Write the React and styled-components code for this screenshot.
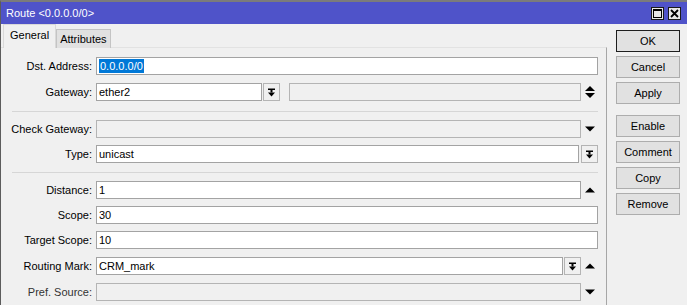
import React from 'react';
import styled, { createGlobalStyle } from 'styled-components';

const GlobalStyle = createGlobalStyle`
  html, body {
    margin: 0;
    padding: 0;
    background: #f0f0f0;
    font-family: 'Liberation Sans', Arial, sans-serif;
    font-size: 11px;
    color: #000;
  }
`;

const Window = styled.div`
  width: 687px;
  height: 305px;
  box-sizing: border-box;
  overflow: hidden;
  display: flex;
  flex-direction: column;
  border-top: 2px solid #7b7b7b;
  border-left: 1px solid #5c5c5c;
  background: #f0f0f0;
`;

const TitleBar = styled.div`
  height: 22px;
  flex: none;
  display: flex;
  align-items: center;
  justify-content: space-between;
  padding: 0 6px 0 5px;
  background: #4f53c9;
  color: #fff;
`;

const TitleButtons = styled.div`
  display: flex;
  gap: 4px;
`;

const TitleButton = styled.div`
  width: 11px;
  height: 11px;
  border: 1px solid #1a1a1a;
  background: #e8e8e8;
  display: flex;
  align-items: center;
  justify-content: center;
`;

const Body = styled.div`
  flex: 1;
  display: flex;
  min-height: 0;
`;

const Main = styled.div`
  width: 606px;
  flex: none;
  display: flex;
  flex-direction: column;
`;

const Tabs = styled.div`
  height: 24px;
  flex: none;
  display: flex;
  align-items: flex-end;
  padding-left: 2px;
`;

const Tab = styled.div`
  box-sizing: border-box;
  height: ${({ active }) => (active ? 24 : 19)}px;
  padding: 0 ${({ active }) => (active ? 6 : 3)}px;
  display: flex;
  align-items: center;
  padding-bottom: ${({ active }) => (active ? 4 : 0)}px;
  background: ${({ active }) => (active ? '#f0f0f0' : '#e1e1e1')};
  border: 1px solid ${({ active }) => (active ? '#d9d9d9' : '#c4c4c4')};
  border-bottom: none;
  position: relative;
  z-index: ${({ active }) => (active ? 1 : 0)};
`;

const Panel = styled.div`
  flex: 1;
  border-right: 1px solid #a6a6a6;
  border-top: 1px solid #e2e2e2;
  margin-top: -1px;
  padding: 9px 8px 0 0;
`;

const Group = styled.div`
  display: flex;
  flex-direction: column;
  gap: ${({ gap }) => gap}px;
`;

const Separator = styled.div`
  height: 1px;
  background: #d6d6d6;
  margin: ${({ top }) => top}px 0 8px 11px;
`;

const Row = styled.div`
  display: flex;
  align-items: center;
  height: 18px;
  margin-top: ${({ extra = 0 }) => extra}px;
`;

const Label = styled.div`
  width: 91px;
  flex: none;
  text-align: right;
  margin-right: 4px;
  white-space: nowrap;
  color: ${({ dim }) => (dim ? '#333' : '#000')};
`;

const Input = styled.div`
  box-sizing: border-box;
  height: 18px;
  ${({ width }) => (width ? `width: ${width}px; flex: none;` : 'flex: 1;')}
  border: 1px solid ${({ disabled }) => (disabled ? '#b4b4b4' : '#a3a3a3')};
  background: ${({ disabled }) => (disabled ? '#f0f0f0' : '#fff')};
  display: flex;
  align-items: center;
  padding-left: 2px;
  white-space: nowrap;
  overflow: hidden;
`;

const Selected = styled.span`
  background: #0078d7;
  color: #fff;
  padding: 1px 1px;
`;

const DropButton = styled.div`
  box-sizing: border-box;
  width: 17px;
  height: 18px;
  flex: none;
  margin-left: ${({ offset }) => offset}px;
  border: 1px solid #b4b4b4;
  background: #f0f0f0;
  display: flex;
  align-items: center;
  justify-content: center;
`;

const Side = styled.div`
  width: 17px;
  flex: none;
  display: flex;
  align-items: center;
  justify-content: center;
`;

const Gap = styled.div`
  width: ${({ size }) => size}px;
  flex: none;
`;

const Actions = styled.div`
  flex: 1;
  padding: 6px 0 0 9px;
  display: flex;
  flex-direction: column;
  gap: 11px;
`;

const ButtonGroup = styled.div`
  display: flex;
  flex-direction: column;
  gap: 4px;
`;

const Button = styled.div`
  box-sizing: border-box;
  width: 64px;
  height: 22px;
  display: flex;
  align-items: center;
  justify-content: center;
  background: #e1e1e1;
  border: 1px solid ${({ primary }) => (primary ? '#1e1e1e' : '#adadad')};
`;

const DropIcon = () => (
  <svg width="9" height="9" viewBox="0 0 9 9">
    <rect x="1" y="0.5" width="7" height="1.5" fill="#000" />
    <rect x="3.5" y="2" width="2" height="2.5" fill="#000" />
    <polygon points="1,4.5 8,4.5 4.5,8.5" fill="#000" />
  </svg>
);

const UpIcon = () => (
  <svg width="10" height="6" viewBox="0 0 10 6">
    <polygon points="0,5.5 10,5.5 5,0.5" fill="#000" />
  </svg>
);

const DownIcon = () => (
  <svg width="10" height="6" viewBox="0 0 10 6">
    <polygon points="0,0.5 10,0.5 5,5.5" fill="#000" />
  </svg>
);

const UpDownIcon = () => (
  <svg width="10" height="12" viewBox="0 0 10 12">
    <polygon points="0,5 10,5 5,0" fill="#000" />
    <polygon points="0,7 10,7 5,12" fill="#000" />
  </svg>
);

const MaximizeIcon = () => (
  <svg width="9" height="9" viewBox="0 0 9 9">
    <rect x="0.5" y="0.5" width="8" height="8" fill="none" stroke="#000" />
    <rect x="0.5" y="0.5" width="8" height="1.5" fill="#000" />
  </svg>
);

const CloseIcon = () => (
  <svg width="9" height="9" viewBox="0 0 9 9">
    <path d="M1 1 L8 8 M8 1 L1 8" stroke="#000" strokeWidth="1.8" />
  </svg>
);

export default function App() {
  return (
    <>
      <GlobalStyle />
      <Window>
        <TitleBar>
          <span>Route &lt;0.0.0.0/0&gt;</span>
          <TitleButtons>
            <TitleButton>
              <MaximizeIcon />
            </TitleButton>
            <TitleButton>
              <CloseIcon />
            </TitleButton>
          </TitleButtons>
        </TitleBar>
        <Body>
          <Main>
            <Tabs>
              <Tab active>General</Tab>
              <Tab>Attributes</Tab>
            </Tabs>
            <Panel>
              <Group gap={8}>
                <Row>
                  <Label>Dst. Address:</Label>
                  <Input>
                    <Selected>0.0.0.0/0</Selected>
                  </Input>
                </Row>
                <Row>
                  <Label>Gateway:</Label>
                  <Input width={166}>ether2</Input>
                  <DropButton offset={1}>
                    <DropIcon />
                  </DropButton>
                  <Gap size={9} />
                  <Input disabled />
                  <Side>
                    <UpDownIcon />
                  </Side>
                </Row>
              </Group>
              <Separator top={10} />
              <Group gap={7}>
                <Row>
                  <Label>Check Gateway:</Label>
                  <Input disabled />
                  <Side>
                    <DownIcon />
                  </Side>
                </Row>
                <Row>
                  <Label>Type:</Label>
                  <Input>unicast</Input>
                  <DropButton offset={2}>
                    <DropIcon />
                  </DropButton>
                </Row>
              </Group>
              <Separator top={9} />
              <Group gap={7}>
                <Row>
                  <Label>Distance:</Label>
                  <Input>1</Input>
                  <Side>
                    <UpIcon />
                  </Side>
                </Row>
                <Row>
                  <Label>Scope:</Label>
                  <Input>30</Input>
                </Row>
                <Row>
                  <Label>Target Scope:</Label>
                  <Input>10</Input>
                </Row>
                <Row extra={1}>
                  <Label>Routing Mark:</Label>
                  <Input>CRM_mark</Input>
                  <DropButton offset={1}>
                    <DropIcon />
                  </DropButton>
                  <Side>
                    <UpIcon />
                  </Side>
                </Row>
                <Row extra={1}>
                  <Label dim>Pref. Source:</Label>
                  <Input disabled />
                  <Side>
                    <DownIcon />
                  </Side>
                </Row>
              </Group>
            </Panel>
          </Main>
          <Actions>
            <ButtonGroup>
              <Button primary>OK</Button>
              <Button>Cancel</Button>
              <Button>Apply</Button>
            </ButtonGroup>
            <ButtonGroup>
              <Button>Enable</Button>
              <Button>Comment</Button>
              <Button>Copy</Button>
              <Button>Remove</Button>
            </ButtonGroup>
          </Actions>
        </Body>
      </Window>
    </>
  );
}
